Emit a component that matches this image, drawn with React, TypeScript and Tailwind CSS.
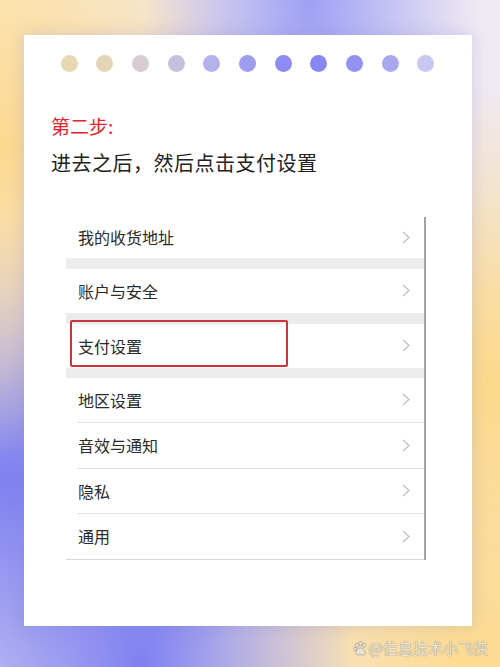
const dotColors = [
  'bg-[#e8d8b2]',
  'bg-[#e4d5b8]',
  'bg-[#d6ccd2]',
  'bg-[#c4c1e0]',
  'bg-[#b3b2ec]',
  'bg-[#9e9df0]',
  'bg-[#8c8cf2]',
  'bg-[#8787f4]',
  'bg-[#9292f1]',
  'bg-[#a9a8ef]',
  'bg-[#c9c8f3]',
];

const Chevron = () => (
  <svg width="8" height="13" viewBox="0 0 8 13" fill="none">
    <polyline points="1,1 7,6.5 1,12" stroke="#bdbdbd" strokeWidth="1.2" />
  </svg>
);

const Paw = () => (
  <svg width="15" height="15" viewBox="0 0 16 16" fill="#e9e3d6" stroke="#a8a296" strokeWidth="0.8">
    <ellipse cx="4.2" cy="4.5" rx="1.8" ry="2.3" />
    <ellipse cx="8" cy="2.8" rx="1.8" ry="2.3" />
    <ellipse cx="11.8" cy="4.5" rx="1.8" ry="2.3" />
    <ellipse cx="2.2" cy="8.6" rx="1.6" ry="2" />
    <path d="M8 7.2c-2.6 0-5 3.3-5 5.5 0 1.6 1.4 2.3 2.6 2.3 1 0 1.6-.5 2.4-.5s1.4.5 2.4.5c1.2 0 2.6-.7 2.6-2.3 0-2.2-2.4-5.5-5-5.5z" />
  </svg>
);

const Row = ({ label, gap }: { label: string; gap?: boolean }) => (
  <div className={gap ? 'h-[44px] flex items-center justify-between pl-[12px] pr-[14px]' : 'h-[45.5px] ml-[11px] border-b border-[#e2e2e2] flex items-center justify-between pl-[1px] pr-[14px]'}>
    <span className="text-[16px] text-[#2b2b2b]">{label}</span>
    <Chevron />
  </div>
);

const App = () => {
  return (
    <div className="w-[500px] h-[667px] overflow-hidden font-['Noto_Sans_CJK_SC',sans-serif] bg-[#efe9f2] bg-[radial-gradient(ellipse_at_62%_0%,#9fa0f4_0%,transparent_38%),radial-gradient(ellipse_at_0%_22%,#fcd98f_0%,transparent_42%),radial-gradient(ellipse_at_0%_72%,#7d80f0_0%,transparent_40%),radial-gradient(ellipse_at_28%_100%,#7f81f1_0%,transparent_42%),radial-gradient(ellipse_at_100%_58%,#fcd98a_0%,transparent_55%),radial-gradient(ellipse_at_95%_100%,#fddb8e_0%,transparent_50%),radial-gradient(ellipse_at_0%_0%,#fbecd0_0%,transparent_30%)]">
      <div className="pt-[35px] px-[24px]">
        <div className="w-[448px] h-[591px] bg-white shadow-[0_0_14px_rgba(120,120,200,0.25)] pt-[19.5px] pl-[27px]">
          <div className="flex gap-[18.7px] pl-[9.5px]">
            {dotColors.map((c, i) => (
              <div key={i} className={`w-[17px] h-[17px] rounded-full ${c}`} />
            ))}
          </div>

          <div className="mt-[42px] text-[19px] leading-[24px] text-[#e8222a]">第二步:</div>
          <div className="mt-[12px] text-[20px] leading-[26px] tracking-[0.5px] text-[#222222]">进去之后，然后点击支付设置</div>

          <div className="mt-[41px] ml-[15px] w-[360px] border-r-2 border-[#a3a3a3]">
            <div className="h-[41px] flex items-center justify-between pl-[12px] pr-[14px]">
              <span className="text-[16px] text-[#2b2b2b]">我的收货地址</span>
              <Chevron />
            </div>
            <div className="h-[11px] bg-[#ececec]" />
            <Row label="账户与安全" gap />
            <div className="h-[11px] bg-[#ececec]" />
            <div className="relative">
              <Row label="支付设置" gap />
              <div className="absolute top-[-4px] left-[4px] w-[218px] h-[47px] border-2 border-[#c9353f] rounded-[2px]" />
            </div>
            <div className="h-[10px] bg-[#ececec]" />
            <Row label="地区设置" />
            <Row label="音效与通知" />
            <Row label="隐私" />
            <div className="h-[45.5px] border-b border-[#d8d8d8] flex items-center justify-between pl-[12px] pr-[14px]">
              <span className="text-[16px] text-[#2b2b2b]">通用</span>
              <Chevron />
            </div>
          </div>
        </div>
        <div className="flex justify-end items-center gap-[1px] mt-[13px] mr-[-12px] text-[15px] leading-[18px] text-[#ebe5d8] [text-shadow:0_0_1px_#9c968a,0_0_1px_#9c968a]">
          <Paw />
          <span>@信息技术小飞侠</span>
        </div>
      </div>
    </div>
  );
};

export default App;
